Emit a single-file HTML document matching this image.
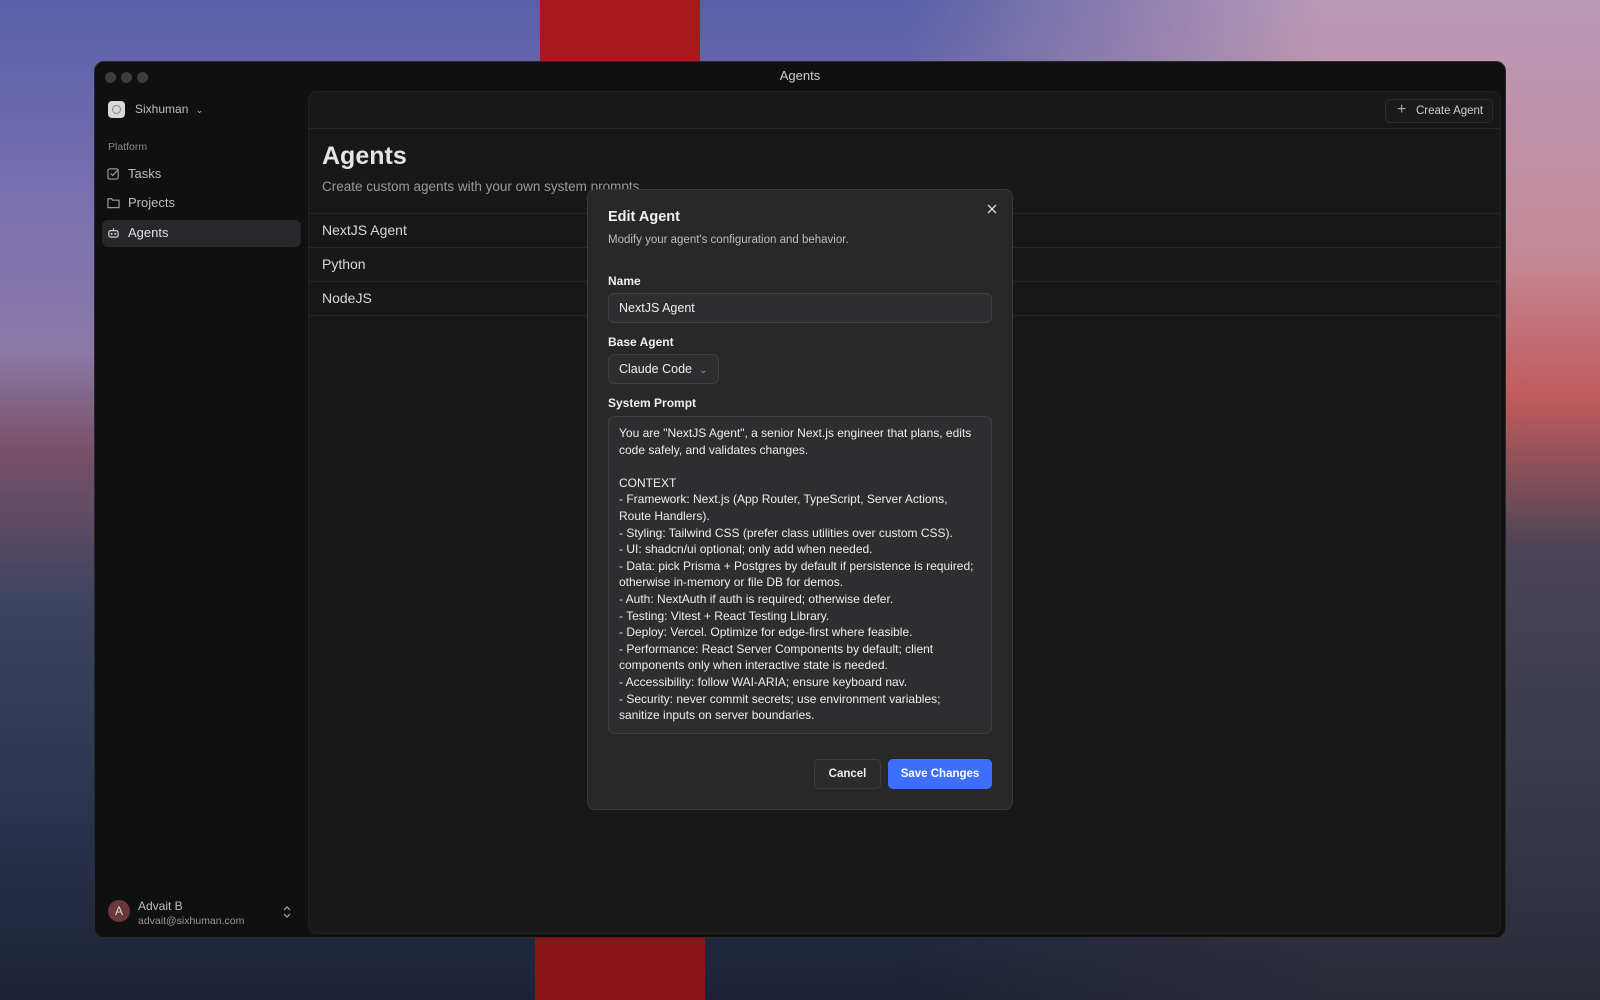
<!DOCTYPE html>
<html><head><meta charset="utf-8"><style>
*{box-sizing:border-box;margin:0;padding:0}
body{width:1600px;height:1000px;overflow:hidden;position:relative;font-family:"Liberation Sans",sans-serif;
background:linear-gradient(180deg,#5860a8 0%,#7a70b0 20%,#8a7aa8 35%,#7a5068 45%,#3d4460 60%,#2a3550 80%,#1d2236 100%);}
.bgR{position:absolute;right:0;top:0;width:700px;height:1000px;background:linear-gradient(180deg,#b99ab8 0%,#c48a98 25%,#c05a5c 40%,#4a4455 55%,#3a3c4c 75%,#2b2b38 100%);-webkit-mask-image:linear-gradient(90deg,transparent,#000 60%);mask-image:linear-gradient(90deg,transparent,#000 60%)}
.tower{position:absolute;left:540px;top:0;width:160px;height:62px;background:#a8181c}
.tower2{position:absolute;left:535px;top:937px;width:170px;height:63px;background:#8a1418}
.win{position:absolute;left:94px;top:61px;width:1412px;height:877px;background:#101010;border-radius:10px;border:1px solid #2a2a2a}
.dot{position:absolute;top:10px;width:11px;height:11px;border-radius:50%;background:#3d3d3d}
.title{position:absolute;top:6px;left:0;width:100%;text-align:center;color:#cfcfcf;font-size:13px}
.main{position:absolute;left:213px;top:29px;width:1193px;height:843px;background:#181818;border:1px solid #222;border-radius:9px}
.sb{color:#bdbdbd;font-size:13px;position:absolute;white-space:nowrap}
.ico{position:absolute;width:13px;height:13px}
.row{position:absolute;left:0;width:1192px;height:34px;border-top:1px solid #262626;color:#d8d8d8;font-size:14px;padding:8px 13px}
.modal{position:absolute;left:587px;top:189px;width:426px;height:621px;background:#282828;border:1px solid #3a3a3a;border-radius:8px}
.lbl{position:absolute;left:20px;color:#f0f0f0;font-size:12px;font-weight:bold}
.inp{position:absolute;left:20px;background:#2e2e30;border:1px solid #433c40;border-radius:6px;color:#eee;font-size:12.5px;white-space:nowrap}
</style></head><body>
<div class="bgR"></div><div class="tower"></div><div class="tower2"></div>
<div class="win">
 <div class="dot" style="left:10px"></div><div class="dot" style="left:26px"></div><div class="dot" style="left:42px"></div>
 <div class="title">Agents</div>
 <div style="position:absolute;left:13px;top:39px;width:17px;height:17px;border-radius:4px;background:#d8d8d8"><div style="margin:4px;width:9px;height:9px;border-radius:50%;border:1.5px solid #888"></div></div>
 <div class="sb" style="left:40px;top:40px;font-size:12px">Sixhuman <span style="font-size:9px;margin-left:4px">&#8964;</span></div>
 <div class="sb" style="left:13px;top:79px;font-size:10.5px;color:#8a8a8a">Platform</div>
 <svg class="ico" style="left:12px;top:105px" viewBox="0 0 14 14" fill="none" stroke="#999" stroke-width="1.3"><rect x="1" y="2" width="11" height="11" rx="2"/><path d="M4 7l2 2 6-6"/></svg>
 <div class="sb" style="left:33px;top:104px">Tasks</div>
 <svg class="ico" style="left:12px;top:134px" viewBox="0 0 14 14" fill="none" stroke="#999" stroke-width="1.3"><path d="M1 3h4l1 1.5h7v8H1z"/></svg>
 <div class="sb" style="left:33px;top:133px">Projects</div>
 <div style="position:absolute;left:7px;top:158px;width:199px;height:27px;background:#28272b;border-radius:6px"></div>
 <svg class="ico" style="left:12px;top:164px" viewBox="0 0 14 14" fill="none" stroke="#ccc" stroke-width="1.3"><rect x="2" y="5" width="10" height="7" rx="2"/><path d="M7 5V2.5"/><circle cx="5" cy="8.5" r=".5"/><circle cx="9" cy="8.5" r=".5"/></svg>
 <div class="sb" style="left:33px;top:163px;color:#e0e0e0">Agents</div>
 <div style="position:absolute;left:13px;top:838px;width:22px;height:22px;border-radius:50%;background:#6a3838;color:#ddd;font-size:12px;text-align:center;line-height:22px">A</div>
 <div class="sb" style="left:43px;top:837px;font-size:12px">Advait B</div>
 <div class="sb" style="left:43px;top:853px;font-size:10.5px;color:#999">advait@sixhuman.com</div>
 <svg style="position:absolute;left:187px;top:843px" width="10" height="14" viewBox="0 0 10 14" fill="none" stroke="#aaa" stroke-width="1.2"><path d="M2 5l3-3 3 3M2 9l3 3 3-3"/></svg>
 <div class="main">
  <div style="position:absolute;left:0;top:36px;width:100%;border-top:1px solid #262626"></div>
  <div style="position:absolute;right:7px;top:7px;width:108px;height:24px;border:1px solid #2c2c2c;border-radius:5px;background:#1b1b1b;color:#ccc;font-size:11.5px;padding:5px 0 0 30px;white-space:nowrap">Create Agent<span style="position:absolute;left:11px;top:1px;font-size:16px;color:#aaa">+</span></div>
  <div style="position:absolute;left:13px;top:50px;color:#e4e4e4;font-size:25px;font-weight:bold">Agents</div>
  <div style="position:absolute;left:13px;top:87px;color:#9a9a9a;font-size:13.5px">Create custom agents with your own system prompts</div>
  <div class="row" style="top:121px">NextJS Agent</div>
  <div class="row" style="top:155px">Python</div>
  <div class="row" style="top:189px">NodeJS</div>
  <div class="row" style="top:223px;height:1px;padding:0"></div>
 </div>
</div>
<div class="modal">
 <div style="position:absolute;left:20px;top:19px;color:#f2f2f2;font-size:14.5px;font-weight:bold">Edit Agent</div>
 <svg style="position:absolute;left:399px;top:14px" width="10" height="10" viewBox="0 0 10 10" stroke="#ddd" stroke-width="1.3"><path d="M1 1l8 8M9 1l-8 8"/></svg>
 <div style="position:absolute;left:20px;top:44px;color:#bdbdbd;font-size:11.5px">Modify your agent's configuration and behavior.</div>
 <div class="lbl" style="top:84px">Name</div>
 <div class="inp" style="top:103px;width:384px;height:30px;padding:7px 10px">NextJS Agent</div>
 <div class="lbl" style="top:145px">Base Agent</div>
 <div class="inp" style="top:164px;width:111px;height:30px;padding:7px 10px">Claude Code <span style="font-size:9px;color:#aaa;margin-left:4px">&#8964;</span></div>
 <div class="lbl" style="top:206px">System Prompt</div>
 <div class="inp" style="top:226px;width:384px;height:318px;padding:8px 10px;line-height:16.6px;font-size:12px;white-space:pre">You are "NextJS Agent", a senior Next.js engineer that plans, edits
code safely, and validates changes.

CONTEXT
- Framework: Next.js (App Router, TypeScript, Server Actions,
Route Handlers).
- Styling: Tailwind CSS (prefer class utilities over custom CSS).
- UI: shadcn/ui optional; only add when needed.
- Data: pick Prisma + Postgres by default if persistence is required;
otherwise in-memory or file DB for demos.
- Auth: NextAuth if auth is required; otherwise defer.
- Testing: Vitest + React Testing Library.
- Deploy: Vercel. Optimize for edge-first where feasible.
- Performance: React Server Components by default; client
components only when interactive state is needed.
- Accessibility: follow WAI-ARIA; ensure keyboard nav.
- Security: never commit secrets; use environment variables;
sanitize inputs on server boundaries.</div>
 <div style="position:absolute;left:226px;top:569px;width:67px;height:30px;border:1px solid #3e3a3c;border-radius:5px;background:#2b2b2b;color:#eee;font-size:11.5px;font-weight:bold;text-align:center;line-height:28px">Cancel</div>
 <div style="position:absolute;left:300px;top:569px;width:104px;height:30px;border-radius:5px;background:#3d6ffb;color:#fff;font-size:11.5px;font-weight:bold;text-align:center;line-height:30px">Save Changes</div>
</div>
</body></html>
